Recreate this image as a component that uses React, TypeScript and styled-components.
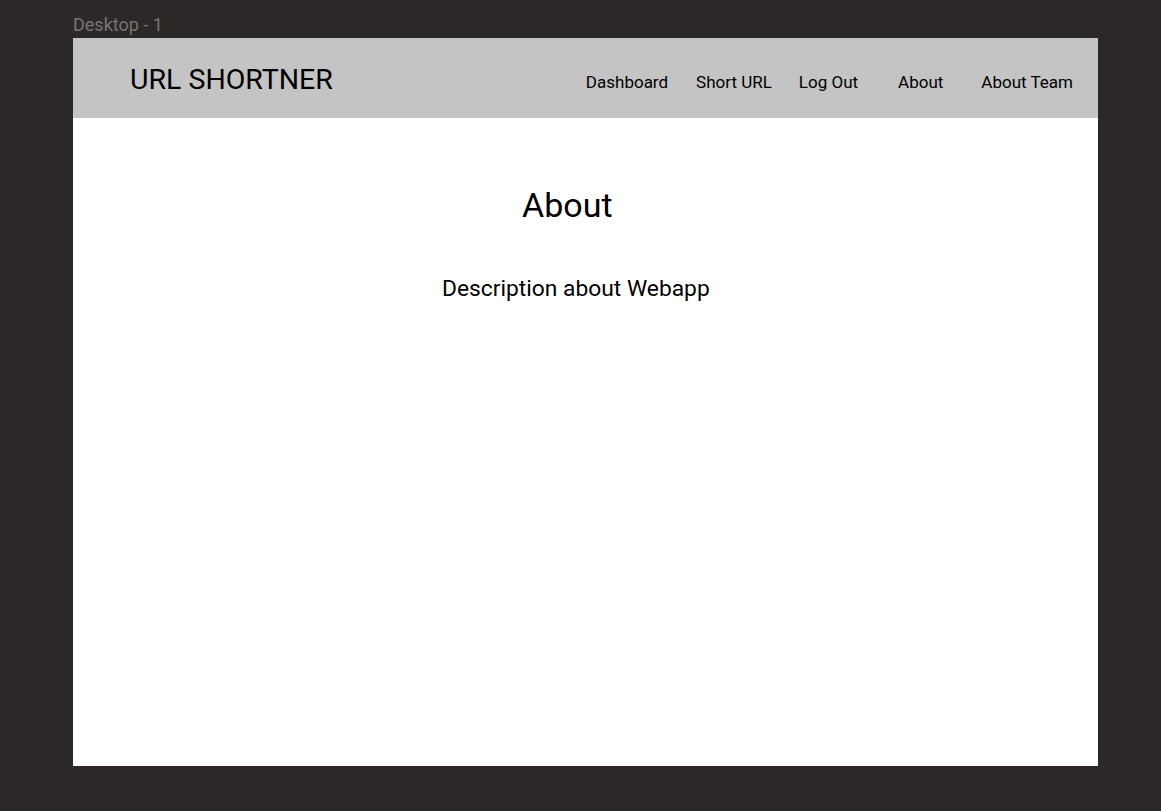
import React from "react";
import styled, { createGlobalStyle } from "styled-components";

const Global = createGlobalStyle`
  html, body { margin: 0; padding: 0; background: #2c2827; }
  body { font-family: Roboto, "Noto Sans", Arial, sans-serif; }
`;

const Canvas = styled.div`
  width: 1161px;
  height: 811px;
  box-sizing: border-box;
  padding: 14px 0 0 73px;
  display: flex;
  flex-direction: column;
  gap: 2px;
`;

const FrameLabel = styled.div`
  font-size: 18px;
  line-height: 22px;
  color: #767474;
`;

const Frame = styled.div`
  width: 1025px;
  height: 728px;
  background: #ffffff;
  display: flex;
  flex-direction: column;
`;

const Header = styled.header`
  height: 80px;
  background: #c4c4c4;
  display: flex;
  align-items: center;
  padding: 0 25px 0 57px;
`;

const Brand = styled.h1`
  margin: 0;
  font-size: 28.5px;
  font-weight: 400;
  color: #000;
  line-height: 36px;
  margin-top: 4px;
  flex: 1;
`;

const Nav = styled.nav`
  display: flex;
  align-items: center;
  margin-top: 8px;
`;

const NavItem = styled.a<{ $gap: number }>`
  font-size: 17px;
  line-height: 20px;
  color: #000;
  text-decoration: none;
  margin-left: ${(p) => p.$gap}px;
`;

const Main = styled.main`
  display: flex;
  flex-direction: column;
  align-items: flex-start;
`;

const Heading = styled.h2`
  margin: 67px 0 0 449px;
  font-size: 34px;
  font-weight: 400;
  line-height: 40px;
  color: #000;
`;

const Description = styled.p`
  margin: 51px 0 0 369px;
  font-size: 22.8px;
  line-height: 26px;
  color: #000;
`;

const links: { label: string; gap: number }[] = [
  { label: "Dashboard", gap: 0 },
  { label: "Short URL", gap: 28 },
  { label: "Log Out", gap: 27 },
  { label: "About", gap: 40 },
  { label: "About Team", gap: 38 },
];

export default function App() {
  return (
    <>
      <Global />
      <Canvas>
        <FrameLabel>Desktop - 1</FrameLabel>
        <Frame>
          <Header>
            <Brand>URL SHORTNER</Brand>
            <Nav>
              {links.map((l) => (
                <NavItem key={l.label} href="#" $gap={l.gap}>
                  {l.label}
                </NavItem>
              ))}
            </Nav>
          </Header>
          <Main>
            <Heading>About</Heading>
            <Description>Description about Webapp</Description>
          </Main>
        </Frame>
      </Canvas>
    </>
  );
}
